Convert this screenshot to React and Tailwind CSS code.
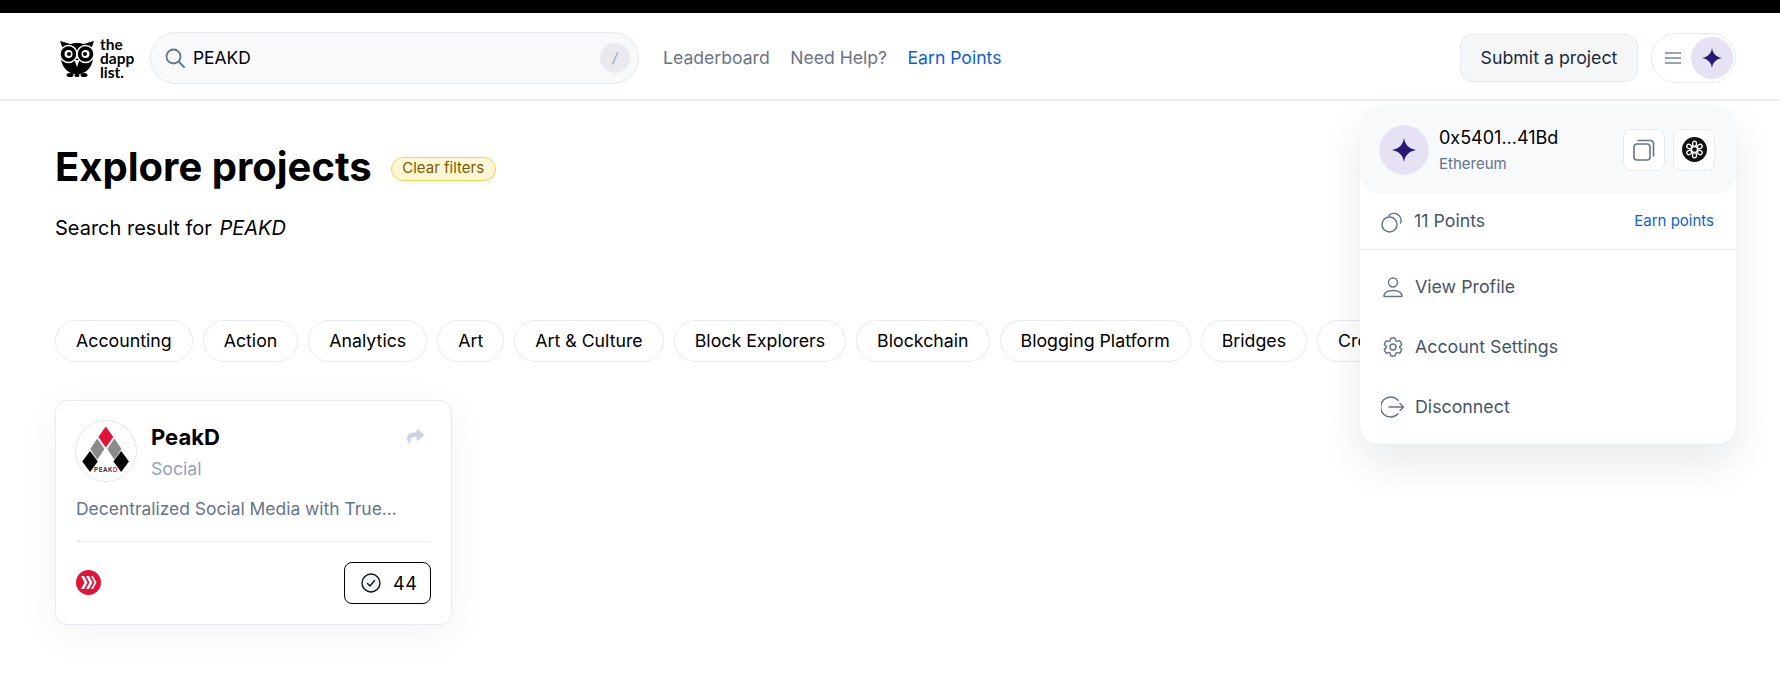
import React from "react";
import { FaShare } from "react-icons/fa";
import { HiOutlineCog6Tooth } from "react-icons/hi2";

const Star = ({ size }) => (
  <svg width={size} height={size} viewBox="0 0 24 24">
    <path d="M12 0C13 6.500 16.500 10.500 24 12C16.500 13.500 13 17.500 12 24C11 17.500 7.500 13.500 0 12C7.500 10.500 11 6.500 12 0Z" fill="#2a1772" />
  </svg>
);

const Owl = () => (
  <svg width="36" height="38" viewBox="0 0 36 38">
    <path d="M1 2C5 3 8 4 11 5C15 3.500 21 3.500 25 5C28 4 31 3 35 2C34 5 33 7 32.500 9C35.500 12 36 17 34 20C33 28 28 34 18 36C8 34 3 28 2 20C0 17 .5 12 3.500 9C3 7 2 5 1 2Z" fill="#000" />
    <circle cx="9.500" cy="15" r="8.500" fill="#000" stroke="#fff" strokeWidth="1.500" />
    <circle cx="26.500" cy="15" r="8.500" fill="#000" stroke="#fff" strokeWidth="1.500" />
    <circle cx="9.500" cy="15" r="4" fill="#fff" />
    <circle cx="26.500" cy="15" r="4" fill="#fff" />
    <circle cx="10" cy="15" r="2" fill="#000" />
    <circle cx="26" cy="15" r="2" fill="#000" />
    <path d="M15.500 21H20.500L18 28Z" fill="#fff" />
    <ellipse cx="11" cy="36" rx="3.500" ry="2" fill="#000" />
    <ellipse cx="18" cy="36.500" rx="2.500" ry="1.500" fill="#000" />
    <ellipse cx="25" cy="36" rx="3.500" ry="2" fill="#000" />
  </svg>
);

const Diamond = ({ cx, top, bottom, half, fill }) => (
  <path d={`M${cx} ${top}L${cx + half} ${(top + bottom) / 2}L${cx} ${bottom}L${cx - half} ${(top + bottom) / 2}Z`} fill={fill} />
);

const PeakLogo = () => (
  <svg width="62" height="62" viewBox="0 0 62 62" className="rounded-full border border-[#e5e7eb] bg-white">
    <Diamond cx={30.800} top={5.700} bottom={27.300} half={7.700} fill="#e31337" />
    <Diamond cx={22} top={18} bottom={40} half={7.300} fill="#8a8a8a" />
    <Diamond cx={39.700} top={18} bottom={40} half={7.300} fill="#8a8a8a" />
    <Diamond cx={14.500} top={31} bottom={52.700} half={8} fill="#000" />
    <Diamond cx={46.700} top={31} bottom={52.700} half={8} fill="#000" />
    <text x="31" y="52.700" textAnchor="middle" fontSize="6.500" fontWeight="600" letterSpacing=".5" fill="#222">PEAK<tspan fill="#e31337">D</tspan></text>
  </svg>
);

const Hive = () => (
  <svg width="25" height="25" viewBox="0 0 25 25">
    <circle cx="12.500" cy="12.500" r="12.500" fill="#e31337" />
    <path d="M5 6H8L11.500 12.500L8 19H5L8.500 12.500Z" fill="#fff" />
    <path d="M10 6H13L16.500 12.500L13 19H10L13.500 12.500Z" fill="#fff" />
    <path d="M15 6H17L20.500 12.500L17 19H15L18.500 12.500Z" fill="#fff" />
  </svg>
);

const Flower = () => (
  <svg width="25" height="25" viewBox="0 0 25 25">
    <circle cx="12.500" cy="12.500" r="12.500" fill="#111" />
    <g fill="none" stroke="#fff" strokeWidth="1.300">
      <circle cx="12.500" cy="12.500" r="3" />
      <ellipse cx="12.500" cy="6.800" rx="2" ry="2.600" />
      <ellipse cx="12.500" cy="18.200" rx="2" ry="2.600" />
      <ellipse cx="7.200" cy="9.500" rx="2.500" ry="2" transform="rotate(30 7.200 9.500)" />
      <ellipse cx="17.800" cy="9.500" rx="2.500" ry="2" transform="rotate(-30 17.800 9.500)" />
      <ellipse cx="7.200" cy="15.500" rx="2.500" ry="2" transform="rotate(-30 7.200 15.500)" />
      <ellipse cx="17.800" cy="15.500" rx="2.500" ry="2" transform="rotate(30 17.800 15.500)" />
    </g>
  </svg>
);

const chips = ["Accounting", "Action", "Analytics", "Art", "Art & Culture", "Block Explorers", "Blockchain", "Blogging Platform", "Bridges", "Crowdfunding", "DAO"];

const items = [
  {
    label: "View Profile",
    icon: (
      <svg width="22" height="22" viewBox="0 0 22 22" fill="none" stroke="#64748b" strokeWidth="1.400">
        <circle cx="11" cy="6.500" r="4.500" />
        <path d="M2 20.500C2 17 5 14.500 11 14.500C17 14.500 20 17 20 20.500Z" strokeLinejoin="round" />
      </svg>
    ),
  },
  { label: "Account Settings", icon: <HiOutlineCog6Tooth size={24} className="text-[#64748b] -mx-px" /> },
  {
    label: "Disconnect",
    icon: (
      <svg width="24" height="22" viewBox="0 0 24 22" fill="none" stroke="#64748b" strokeWidth="1.400" strokeLinecap="round" strokeLinejoin="round">
        <path d="M17 4.200A10 10 0 1 0 17 17.800" />
        <path d="M8 11H22.500M19 7.500L22.500 11L19 14.500" />
      </svg>
    ),
  },
];

export default function App() {
  return (
    <div className="relative h-[675px] w-full overflow-hidden bg-white text-black [font-family:Inter,sans-serif]">
      <div className="h-[13px] bg-black" />
      <header className="flex h-[88px] items-center border-b-2 border-[#eceef2] pl-[59px] pr-[44px] pt-[3px]">
        <div className="flex w-[91px] items-center gap-[5px]">
          <Owl />
          <div className="text-[15.500px] font-bold leading-[14px] [font-family:Lato,sans-serif]">
            <div>the</div>
            <div>dapp</div>
            <div>list.</div>
          </div>
        </div>
        <div className="flex h-[52px] w-[489px] items-center rounded-full border border-[#e8eaef] bg-[#f8f9fb] pl-[13px] pr-[8px]">
          <svg width="22" height="22" viewBox="0 0 22 22" fill="none" stroke="#64748b" strokeWidth="1.800" strokeLinecap="round">
            <circle cx="9.500" cy="9.500" r="7" />
            <path d="M14.700 14.700L20 20" />
          </svg>
          <span className="ml-[7px] flex-1 pt-px text-[17.400px] font-normal">PEAKD</span>
          <span className="flex h-[30px] w-[30px] items-center justify-center rounded-full bg-[#e8eaef] text-[14px] italic text-[#94a3b8]">/</span>
        </div>
        <nav className="ml-[24px] flex items-center gap-[20.500px] pt-[2px] text-[17.600px] font-normal text-[#6b7385]">
          <span>Leaderboard</span>
          <span>Need Help?</span>
          <span className="text-[#0b5fd6]">Earn Points</span>
        </nav>
        <div className="ml-auto flex items-center gap-[13px]">
          <button className="h-[48px] w-[178px] rounded-[12px] border border-[#e9ebef] bg-[#f5f6f7] pt-[2px] text-[17.750px] font-normal text-[#1e293b]">Submit a project</button>
          <div className="flex h-[50px] w-[85px] items-center justify-between rounded-full border border-[#e9ebef] bg-white pl-[13px] pr-[2px]">
            <svg width="16" height="12" viewBox="0 0 16 12" stroke="#7b8496" strokeWidth="1.500">
              <path d="M0 1H16M0 6H16M0 11H16" />
            </svg>
            <div className="flex h-[42px] w-[42px] items-center justify-center rounded-full bg-[#e6e2f3]">
              <Star size={20} />
            </div>
          </div>
        </div>
      </header>

      <main className="pl-[55px]">
        <div className="flex items-center pt-[42px]">
          <h1 className="text-[40px] font-bold leading-[48px]">Explore projects</h1>
          <button className="ml-[19px] mt-[3px] flex h-[24px] w-[105px] items-center justify-center rounded-full border border-[#fcd34d] bg-[#fff7d6] text-[15px] font-normal text-[#7a5c00]">Clear filters</button>
        </div>
        <p className="mt-[24px] text-[20px] leading-[27px]">
          Search result for <em className="ml-[2px]">PEAKD</em>
        </p>
        <div className="mt-[78px] flex gap-[10px] overflow-hidden">
          {chips.map((c) => (
            <span key={c} className="flex h-[42px] shrink-0 items-center rounded-full border border-[#e9ebef] bg-white px-[20px] text-[17.750px] font-normal">{c}</span>
          ))}
        </div>
        <article className="mt-[38px] h-[225px] w-[397px] rounded-[12px] border border-[#e9ebef] bg-white px-[20px] pt-[19px] shadow-[0_10px_40px_rgba(15,23,42,0.05)]">
          <div className="-ml-px flex">
            <PeakLogo />
            <div className="ml-[14px] flex-1">
              <div className="pt-[2px] text-[22px] font-bold leading-[30px] text-black">PeakD</div>
              <div className="mt-[4px] text-[17.700px] font-normal leading-[26px] text-[#94a3b8]">Social</div>
            </div>
            <FaShare size={17} className="mr-[7px] mt-[8px] text-[#cbd5e1]" />
          </div>
          <p className="mt-[14px] text-[17.450px] leading-[26px] text-[#64748b]">Decentralized Social Media with True...</p>
          <div className="mt-[19px] h-px bg-[#e9ebef]" />
          <div className="mt-[20px] flex items-start justify-between">
            <div className="mt-[8px]"><Hive /></div>
            <button className="flex h-[42px] w-[87px] items-center gap-[12px] rounded-[8px] border border-black bg-white pl-[16px] text-[18px] font-normal tracking-[0.5px]">
              <svg width="20" height="20" viewBox="0 0 20 20" fill="#f1f5f9" stroke="#111" strokeWidth="1.400" strokeLinecap="round" strokeLinejoin="round">
                <circle cx="10" cy="10" r="9" />
                <path d="M6.500 10.500L9 13L13.500 7.500" fill="none" />
              </svg>
              44
            </button>
          </div>
        </article>
      </main>

      <div className="absolute left-[1360px] top-[105px] h-[339px] w-[376px] rounded-[20px] bg-white shadow-[0_20px_40px_rgba(15,23,42,0.09)]">
        <div className="flex h-[89px] items-center rounded-[20px] bg-[#f8f9fb] pl-[19px] pr-[21px]">
          <div className="flex h-[50px] w-[50px] items-center justify-center rounded-full border border-[#ebe9f3] bg-[#e6e2f3]">
            <Star size={24} />
          </div>
          <div className="ml-[10px] flex-1">
            <div className="text-[18px] font-normal leading-[26px] text-black">0x5401...41Bd</div>
            <div className="pt-[2px] text-[15px] font-normal leading-[22px] text-[#64748b]">Ethereum</div>
          </div>
          <div className="flex items-center gap-[8px]">
            <span className="flex h-[42px] w-[42px] items-center justify-center rounded-[8px] border border-[#e9ebef] bg-white">
              <svg width="22" height="22" viewBox="0 0 22 22" fill="none" stroke="#6b7385" strokeWidth="1.600" strokeLinejoin="round">
                <rect x="1" y="5" width="16" height="16" rx="3" />
                <path d="M5 1.500H17.500C19.500 1.500 20.500 2.500 20.500 4.500V17" strokeLinecap="round" />
              </svg>
            </span>
            <span className="flex h-[42px] w-[42px] items-center justify-center rounded-[8px] border border-[#e9ebef] bg-white">
              <Flower />
            </span>
          </div>
        </div>
        <div className="flex h-[56px] items-center justify-between border-b border-[#e9ebef] pl-[21px] pr-[22px]">
          <div className="flex items-center gap-[10px] text-[17.800px] font-normal text-[#475569]">
            <svg width="23" height="23" viewBox="0 0 23 23" fill="none" stroke="#64748b" strokeWidth="1.500" strokeLinecap="round">
              <circle cx="8.500" cy="14.500" r="7.500" />
              <path d="M8 5.500A7 7 0 0 1 19.500 13" />
            </svg>
            11 Points
          </div>
          <span className="text-[15px] font-normal text-[#0b5fd6]">Earn points</span>
        </div>
        <ul className="pt-[7px]">
          {items.map((it) => (
            <li key={it.label} className="flex h-[60px] items-center gap-[10px] pl-[21px] text-[17.800px] font-normal text-[#475569]">
              <span className="flex w-[24px] justify-center">{it.icon}</span>
              {it.label}
            </li>
          ))}
        </ul>
      </div>
    </div>
  );
}
